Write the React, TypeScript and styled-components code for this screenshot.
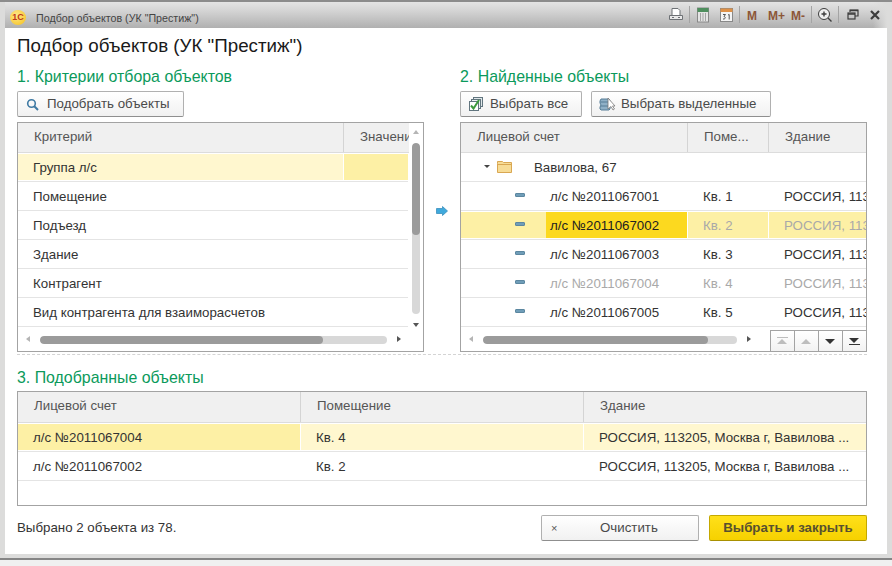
import React from "react";
import styled, { createGlobalStyle } from "styled-components";

const Global = createGlobalStyle`
  html, body { margin: 0; padding: 0; background: #f0f0f0; }
  body { font-family: "Liberation Sans", Arial, sans-serif; font-size: 13.3px; color: #333; }
`;

const Screen = styled.div`
  position: relative; width: 892px; height: 566px; overflow: hidden; background: #f0f0f0;
`;
const Frame = styled.div`
  position: absolute; left: 0; top: 0; width: 892px; height: 560px; background: #dcdcdb;
  border-top: 2px solid #8c8c8c; border-bottom: 2px solid #858585; box-sizing: border-box;
`;
const TitleBar = styled.div`
  position: absolute; left: 5px; top: 2px; width: 882px; height: 26px;
  background: linear-gradient(to bottom, #e4e4e4 0%, #d6d6d6 30%, #b0b0b0 100%);
  &::after {
    content: ""; position: absolute; right: 0; top: 0; bottom: 0; width: 14px;
    background: linear-gradient(to right, rgba(220, 220, 219, 0), #dcdcdb);
  }
`;
const Logo = styled.div`
  position: absolute; left: 10px; top: 10px; width: 16px; height: 15px; border-radius: 50%;
  background: radial-gradient(circle at 40% 35%, #ffe98a, #f4be18);
  color: #c0391a; font: bold 9px/15px "Liberation Sans", sans-serif; text-align: center;
`;
const WindowTitle = styled.div`
  position: absolute; left: 36px; top: 10px; font-size: 10.7px; line-height: 16px; color: #444; white-space: nowrap;
`;
const TopIcon = styled.div<{ $x: number }>`
  position: absolute; left: ${(p) => p.$x}px; top: 7px; width: 16px; height: 16px;
  svg { display: block; }
`;
const TopSep = styled.div<{ $x: number }>`
  position: absolute; left: ${(p) => p.$x}px; top: 6px; width: 1px; height: 17px; background: #a4a4a4;
`;
const MemoryKey = styled.div<{ $x: number }>`
  position: absolute; left: ${(p) => p.$x}px; top: 8px; font: bold 12px/16px "Liberation Sans", sans-serif; color: #8c5638;
`;
const Panel = styled.div`
  position: absolute; left: 5px; top: 28px; width: 882px; height: 526px; background: #fff;
`;
const Content = styled.div`
  position: absolute; left: -5px; top: -28px; width: 892px; height: 566px;
`;
const PageTitle = styled.h1`
  position: absolute; left: 17px; top: 35px; margin: 0; font-size: 18.75px; font-weight: normal; line-height: 22px; color: #1a1a1a; white-space: nowrap;
`;
const SectionTitle = styled.h2<{ $x: number; $y: number }>`
  position: absolute; left: ${(p) => p.$x}px; top: ${(p) => p.$y}px; margin: 0; font-size: 15.9px; font-weight: normal; line-height: 18px; color: #0b9a5b; white-space: nowrap;
`;
const Button = styled.div<{ $x: number; $y: number; $w: number; $pad?: number; $primary?: boolean }>`
  position: absolute; left: ${(p) => p.$x}px; top: ${(p) => p.$y}px; width: ${(p) => p.$w}px; height: 26px; box-sizing: border-box;
  border: 1px solid ${(p) => (p.$primary ? "#c4a800" : "#b0b0b0")}; border-bottom-color: ${(p) => (p.$primary ? "#a89000" : "#8f8f8f")};
  border-radius: 2px;
  background: ${(p) => (p.$primary ? "linear-gradient(#ffe01a, #f6d100)" : "linear-gradient(#ffffff, #f1f1f1)")};
  color: ${(p) => (p.$primary ? "#57502f" : "#4a4a4a")};
  font-size: 13.3px; line-height: 24px; padding-left: ${(p) => p.$pad ?? 0}px; white-space: nowrap;
  text-align: ${(p) => (p.$pad === undefined ? "center" : "left")};
  font-weight: ${(p) => (p.$primary ? "bold" : "normal")};
`;
const ClearLabel = styled.span`
  position: absolute; left: 58px; top: 0;
`;
const ButtonIcon = styled.span<{ $x: number; $y: number }>`
  position: absolute; left: ${(p) => p.$x}px; top: ${(p) => p.$y}px; line-height: 0;
`;
const Table = styled.div<{ $x: number; $y: number; $w: number; $h: number }>`
  position: absolute; left: ${(p) => p.$x}px; top: ${(p) => p.$y}px; width: ${(p) => p.$w}px; height: ${(p) => p.$h}px;
  box-sizing: border-box; border: 1px solid #a3a3a3; background: #fff; overflow: hidden;
`;
const HeadRow = styled.div<{ $cols: string; $h?: number }>`
  display: grid; grid-template-columns: ${(p) => p.$cols}; height: ${(p) => p.$h ?? 29}px; background: #f0f0f0;
  border-bottom: 1px solid #dcdcdc; box-sizing: content-box;
`;
const HeadCell = styled.div<{ $pad?: number }>`
  padding-left: ${(p) => p.$pad ?? 16}px; line-height: 28px; color: #555; font-size: 13.3px; white-space: nowrap; overflow: hidden;
  border-right: 1px solid #d4d4d4; &:last-child { border-right: 0; }
`;
const Row = styled.div<{ $cols: string; $w?: number }>`
  display: grid; grid-template-columns: ${(p) => p.$cols}; height: 28px; margin-bottom: 0;
  width: ${(p) => (p.$w ? `${p.$w}px` : "auto")}; border-bottom: 1px solid #e4e4e4;
`;
const Cell = styled.div<{ $tone?: "light" | "mid"; $muted?: boolean; $pad?: number }>`
  position: relative; box-sizing: border-box; padding-left: ${(p) => p.$pad ?? 15}px; line-height: ${(p) => (p.$tone ? 28 : 30)}px; white-space: nowrap; overflow: hidden;
  color: ${(p) => (p.$muted ? "#a9a9a9" : "#333")}; font-size: 13.3px;
  background: ${(p) => (p.$tone === "mid" ? "#fdf0a5" : p.$tone === "light" ? "#fff7cf" : "transparent")};
  border: ${(p) => (p.$tone ? "1px solid #fff" : "0")};
  border-left: 0;
  &:last-child { border-right: 0; }
`;
const VScroll = styled.div`
  position: absolute; right: 0; top: 0; width: 14px; height: 206px; background: #fff;
`;
const VTrack = styled.div`
  position: absolute; left: 3px; top: 20px; width: 8px; height: 171px; background: #d8d8d8; border-radius: 4px; overflow: hidden;
`;
const VThumb = styled.div`
  width: 8px; height: 92px; background: #9b9b9b; border-radius: 4px;
`;
const HScroll = styled.div<{ $w: number }>`
  position: absolute; left: 0; bottom: 0; width: ${(p) => p.$w}px; height: 22px; background: #fff;
`;
const HTrack = styled.div<{ $x: number; $w: number }>`
  position: absolute; left: ${(p) => p.$x}px; top: 7px; width: ${(p) => p.$w}px; height: 8px; background: #d8d8d8; border-radius: 4px; overflow: hidden;
`;
const HThumb = styled.div<{ $w: number }>`
  height: 8px; width: ${(p) => p.$w}px; background: #9b9b9b; border-radius: 4px;
`;
const Tri = styled.div<{ $x: number; $y: number; $dir: "u" | "d" | "l" | "r"; $c: string }>`
  position: absolute; left: ${(p) => p.$x}px; top: ${(p) => p.$y}px; width: 0; height: 0; border: 0 solid transparent;
  ${(p) => p.$dir === "u" && `border-width: 0 3.5px 4px; border-bottom-color: ${p.$c};`}
  ${(p) => p.$dir === "d" && `border-width: 4px 3.5px 0; border-top-color: ${p.$c};`}
  ${(p) => p.$dir === "l" && `border-width: 3.5px 4px 3.5px 0; border-right-color: ${p.$c};`}
  ${(p) => p.$dir === "r" && `border-width: 3.5px 0 3.5px 4px; border-left-color: ${p.$c};`}
`;
const NavBox = styled.div`
  position: absolute; right: 0; bottom: 0; display: flex; height: 21px; background: #fff;
`;
const NavBtn = styled.div`
  position: relative; width: 24px; box-sizing: border-box; border-left: 1px solid #a3a3a3; border-top: 1px solid #a3a3a3;
  background: linear-gradient(#fff, #f2f2f2);
`;
const NavBar = styled.div<{ $y: number; $c: string }>`
  position: absolute; left: 6px; top: ${(p) => p.$y}px; width: 11px; height: 1px; background: ${(p) => p.$c};
`;
const NavArrow = styled.div<{ $y: number; $up?: boolean; $c: string }>`
  position: absolute; left: 6px; top: ${(p) => p.$y}px; width: 0; height: 0; border: 0 solid transparent;
  ${(p) => p.$up ? `border-width: 0 5.5px 5px; border-bottom-color: ${p.$c};` : `border-width: 5px 5.5px 0; border-top-color: ${p.$c};`}
`;
const Expander = styled.div`
  position: absolute; left: 23px; top: 12px; width: 0; height: 0; border: 0 solid transparent; border-width: 3px 3px 0; border-top-color: #444;
`;
const FolderSlot = styled.span`
  position: absolute; left: 36px; top: 8px; line-height: 0;
`;
const DashMark = styled.div<{ $inset?: boolean }>`
  position: absolute; left: 54px; top: ${(p) => (p.$inset ? 10 : 11)}px; width: 10px; height: 4px; box-sizing: border-box; border-radius: 1px;
  background: #6f9db8; border: 1px solid #5c87a0;
`;
const AccountMark = styled.span`
  position: absolute; left: 85px; top: 0; bottom: 0; width: 141px; padding-left: 4px; box-sizing: border-box; background: #fcd91f; color: #222;
`;
const FlowArrow = styled.span`
  position: absolute; left: 436px; top: 206px; line-height: 0;
`;
const Dashed = styled.div`
  position: absolute; left: 17px; top: 354px; width: 850px; border-top: 1px dashed #d4d4d4;
`;
const Status = styled.div`
  position: absolute; left: 17px; top: 520px; line-height: 16px; color: #333; font-size: 13.3px;
`;
const Cross = styled.span`
  position: absolute; left: 9px; top: 0; color: #555; font-size: 11px; line-height: 24px;
`;

const cL = "326px 64px";
const crit = ["Группа л/с", "Помещение", "Подъезд", "Здание", "Контрагент", "Вид контрагента для взаиморасчетов"];
const cR = "227px 81px 1fr";
const ru = "РОССИЯ, 113205, Москва г, Вавилова д. 67";
const found = [
  ["л/с №2011067001", "Кв. 1"],
  ["л/с №2011067002", "Кв. 2"],
  ["л/с №2011067003", "Кв. 3"],
  ["л/с №2011067004", "Кв. 4"],
  ["л/с №2011067005", "Кв. 5"],
];
const cB = "283px 283px 1fr";

export default function App() {
  return (
    <Screen>
      <Global />
      <Frame />
      <TitleBar />
      <Logo>1С</Logo>
      <WindowTitle>Подбор объектов (УК "Престиж")</WindowTitle>
      <TopIcon $x={668}>
        <svg width="16" height="16" viewBox="0 0 16 16" fill="none" stroke="#6d7175"><path d="M4 8V1.500h6l2 2V8" fill="#fff"/><path d="M1.500 8.500h13v4h-13z" fill="#e8e8e8"/><path d="M4 12.500h8M4 10.500h2M10 10.500h2"/></svg>
      </TopIcon>
      <TopSep $x={689} />
      <TopIcon $x={695}>
        <svg width="16" height="16" viewBox="0 0 16 16"><rect x="2.500" y="1" width="11" height="14" fill="#e4e4e4" stroke="#888"/><rect x="2.500" y="1" width="11" height="4" fill="#4f8f5e"/><path d="M5 7h1M7.500 7h1M10 7h1M5 9h1M7.500 9h1M10 9h1M5 11h1M7.500 11h1M10 11h1M5 13h1M7.500 13h1M10 13h1" stroke="#666"/></svg>
      </TopIcon>
      <TopIcon $x={718}>
        <svg width="16" height="16" viewBox="0 0 16 16"><rect x="2.500" y="1.500" width="12" height="13" fill="#f4f4f4" stroke="#888"/><rect x="2.500" y="1.500" width="12" height="3.500" fill="#de9148"/><path d="M5 7.500h2.500L6 9.500c1.800 0 1.800 3-1 2.500M10 8l1.200-.5v5" fill="none" stroke="#555"/></svg>
      </TopIcon>
      <TopSep $x={739} />
      <MemoryKey $x={747}>M</MemoryKey>
      <MemoryKey $x={768}>M+</MemoryKey>
      <MemoryKey $x={791}>M-</MemoryKey>
      <TopSep $x={811} />
      <TopIcon $x={817}>
        <svg width="16" height="16" viewBox="0 0 16 16" fill="none" stroke="#3c3c3c"><circle cx="7" cy="7" r="5.500" fill="#eee"/><path d="M4.500 7h5M7 4.500v5M11 11l3.500 3.500" strokeWidth="1.400"/></svg>
      </TopIcon>
      <TopSep $x={838} />
      <TopIcon $x={845}>
        <svg width="16" height="16" viewBox="0 0 16 16" fill="none" stroke="#3c3c3c" strokeWidth="1.200"><path d="M5 5V3h8v6h-3"/><rect x="3" y="6" width="7" height="6"/><path d="M3 7h7M5 3.500h8" strokeWidth="1.600"/></svg>
      </TopIcon>
      <TopIcon $x={867}>
        <svg width="16" height="16" viewBox="0 0 16 16" stroke="#3c3c3c" strokeWidth="2.200"><path d="M4 4l8 8M12 4l-8 8"/></svg>
      </TopIcon>
      <Panel>
        <Content>
          <PageTitle>Подбор объектов (УК "Престиж")</PageTitle>
          <SectionTitle $x={17} $y={68}>1. Критерии отбора объектов</SectionTitle>
          <SectionTitle $x={460} $y={68}>2. Найденные объекты</SectionTitle>
          <SectionTitle $x={17} $y={369}>3. Подобранные объекты</SectionTitle>

          <Button $x={17} $y={91} $w={167} $pad={29}>
            <ButtonIcon $x={8} $y={6}>
              <svg width="13" height="13" viewBox="0 0 13 13" fill="none" stroke="#3f7aa3" strokeWidth="1.600"><circle cx="5.500" cy="5.500" r="3.800"/><path d="M8.300 8.300L12 12" strokeWidth="2"/></svg>
            </ButtonIcon>
            Подобрать объекты
          </Button>
          <Button $x={460} $y={91} $w={122} $pad={29}>
            <ButtonIcon $x={7} $y={4}>
              <svg width="16" height="16" viewBox="0 0 16 16"><rect x="5.500" y="1.500" width="9" height="9" fill="#dfe7ea" stroke="#62757f"/><rect x="3.500" y="3.500" width="9" height="9" fill="#eef2f3" stroke="#62757f"/><rect x="1.500" y="5.500" width="9" height="9" fill="#fff" stroke="#62757f"/><path d="M3 9.500l2.500 3L11 4" fill="none" stroke="#3d9a3d" strokeWidth="2"/></svg>
            </ButtonIcon>
            Выбрать все
          </Button>
          <Button $x={591} $y={91} $w={180} $pad={29}>
            <ButtonIcon $x={7} $y={4}>
              <svg width="17" height="16" viewBox="0 0 17 16"><path d="M2 3h8l1 2v2l-1 2 1 2v2l-1 1H2l-1-1v-2l1-2-1-2V5z" fill="#8fb0c6" stroke="#567d96"/><path d="M1.500 6h9M1.500 10h9" stroke="#567d96"/><path d="M9 2v11l3-2.500 2 3.500 1.500-1-2-3H16z" fill="#fff" stroke="#777" strokeWidth=".8"/></svg>
            </ButtonIcon>
            Выбрать выделенные
          </Button>

          <Table $x={17} $y={122} $w={407} $h={230}>
            <HeadRow $cols="326px 1fr">
              <HeadCell>Критерий</HeadCell>
              <HeadCell>Значение</HeadCell>
            </HeadRow>
            {crit.map((t, i) => (
              <Row key={t} $cols={cL} $w={390}>
                <Cell $tone={i === 0 ? "light" : undefined}>{t}</Cell>
                <Cell $tone={i === 0 ? "mid" : undefined} />
              </Row>
            ))}
            <VScroll>
              <Tri $x={3.5} $y={7} $dir="u" $c="#b5b5b5" />
              <VTrack><VThumb /></VTrack>
              <Tri $x={3.5} $y={200} $dir="d" $c="#555" />
            </VScroll>
            <HScroll $w={405}>
              <Tri $x={8} $y={7} $dir="l" $c="#b5b5b5" />
              <HTrack $x={22} $w={347}><HThumb $w={283} /></HTrack>
              <Tri $x={379} $y={7} $dir="r" $c="#555" />
            </HScroll>
          </Table>

          <FlowArrow>
            <svg width="12" height="10" viewBox="0 0 12 10"><path d="M0.500 2.500h6V0.500L11.500 5l-5 4.500V7.500h-6z" fill="#3fa9dc" stroke="#3a8fbd" strokeWidth=".8"/></svg>
          </FlowArrow>

          <Table $x={460} $y={122} $w={407} $h={230}>
            <HeadRow $cols={cR}>
              <HeadCell>Лицевой счет</HeadCell>
              <HeadCell>Поме...</HeadCell>
              <HeadCell>Здание</HeadCell>
            </HeadRow>
            <Row $cols="1fr">
              <Cell $pad={73}>
                <Expander />
                <FolderSlot>
                  <svg width="15" height="12" viewBox="0 0 15 12"><path d="M.5 2.500v-2h5l1 1h8v10H.5z" fill="#f7dc96" stroke="#d9a752"/><path d="M.5 3.500h14" stroke="#d9a752"/></svg>
                </FolderSlot>
                Вавилова, 67
              </Cell>
            </Row>
            {found.map(([acc, kv], i) => (
              <Row key={acc} $cols={cR}>
                <Cell $pad={89} $tone={i === 1 ? "mid" : undefined} $muted={i === 3}>
                  <DashMark $inset={i === 1} />
                  {i === 1 ? <AccountMark>{acc}</AccountMark> : acc}
                </Cell>
                <Cell $tone={i === 1 ? "mid" : undefined} $muted={i === 1 || i === 3}>{kv}</Cell>
                <Cell $tone={i === 1 ? "mid" : undefined} $muted={i === 1 || i === 3}>{ru}</Cell>
              </Row>
            ))}
            <HScroll $w={405}>
              <Tri $x={8} $y={7} $dir="l" $c="#b5b5b5" />
              <HTrack $x={22} $w={254}><HThumb $w={225} /></HTrack>
              <Tri $x={286} $y={7} $dir="r" $c="#555" />
            </HScroll>
            <NavBox>
              <NavBtn><NavBar $y={6} $c="#bdbdbd" /><NavArrow $y={8} $up $c="#bdbdbd" /></NavBtn>
              <NavBtn><NavArrow $y={8} $up $c="#bdbdbd" /></NavBtn>
              <NavBtn><NavArrow $y={8} $c="#333" /></NavBtn>
              <NavBtn><NavArrow $y={7} $c="#333" /><NavBar $y={13} $c="#333" /></NavBtn>
            </NavBox>
          </Table>

          <Dashed />

          <Table $x={17} $y={391} $w={850} $h={115}>
            <HeadRow $cols={cB} $h={30}>
              <HeadCell>Лицевой счет</HeadCell>
              <HeadCell>Помещение</HeadCell>
              <HeadCell>Здание</HeadCell>
            </HeadRow>
            <Row $cols={cB}>
              <Cell $tone="mid">л/с №2011067004</Cell>
              <Cell $tone="light">Кв. 4</Cell>
              <Cell $tone="light">РОССИЯ, 113205, Москва г, Вавилова ...</Cell>
            </Row>
            <Row $cols={cB}>
              <Cell>л/с №2011067002</Cell>
              <Cell>Кв. 2</Cell>
              <Cell>РОССИЯ, 113205, Москва г, Вавилова ...</Cell>
            </Row>
          </Table>

          <Status>Выбрано 2 объекта из 78.</Status>
          <Button $x={541} $y={515} $w={158} $pad={0}>
            <Cross>×</Cross>
            <ClearLabel>Очистить</ClearLabel>
          </Button>
          <Button $x={709} $y={515} $w={158} $primary>Выбрать и закрыть</Button>
        </Content>
      </Panel>
    </Screen>
  );
}
